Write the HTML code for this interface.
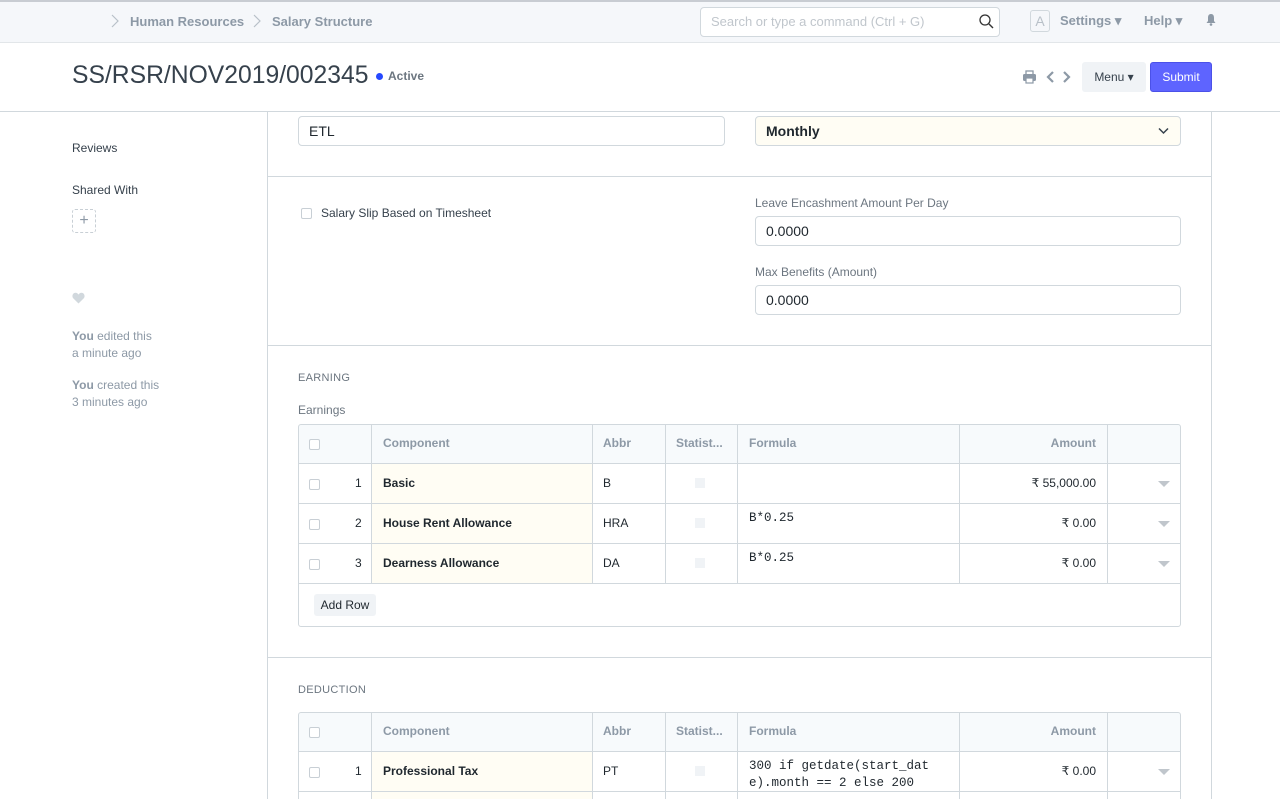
<!DOCTYPE html>
<html><head><meta charset="utf-8"><style>
*{box-sizing:border-box;margin:0;padding:0}
html,body{width:1280px;height:799px;overflow:hidden}
body{background:#fff;font-family:"Liberation Sans",sans-serif;color:#1f272e;position:relative;font-size:13px}
.a{position:absolute}
.nav{left:0;top:0;width:1280px;height:43px;background:#f5f7fa;border-top:2px solid #c8ccd2;border-bottom:1px solid #e2e6e9}
.g{color:#8d99a6}
.inp{border:1px solid #d1d8dd;border-radius:4px;background:#fff;height:30px;padding:0 10px;line-height:28px;font-size:14px}
.lbl{font-size:12px;color:#6c7680}
.row{position:absolute;left:299px;width:881px;height:40px;border-bottom:1px solid #d1d8dd}
.cb{position:absolute;width:11px;height:11px;border:1px solid #c8cfd5;border-radius:2px;background:#fff}
.t{position:absolute;top:0;line-height:40px;font-size:12px}
.mono{font-family:"Liberation Mono",monospace;font-size:12.5px}
.tri{position:absolute;width:0;height:0;border-left:6px solid transparent;border-right:6px solid transparent;border-top:6px solid #c0c6cc}
</style></head><body>
<div class="a nav"></div>
<svg class="a" style="left:110px;top:14px" width="10" height="14" viewBox="0 0 10 14"><path d="M2 1L8 7L2 13" fill="none" stroke="#b8c0c8" stroke-width="1.2"/></svg>
<div class="a g" style="left:130px;top:14px;font-size:13px;font-weight:bold">Human Resources</div>
<svg class="a" style="left:252px;top:14px" width="10" height="14" viewBox="0 0 10 14"><path d="M2 1L8 7L2 13" fill="none" stroke="#b8c0c8" stroke-width="1.2"/></svg>
<div class="a g" style="left:272px;top:14px;font-size:13px;font-weight:bold">Salary Structure</div>
<div class="a inp" style="left:700px;top:7px;width:300px;height:30px;font-size:13px;color:#c0c6cc;line-height:28px">Search or type a command (Ctrl + G)</div>
<svg class="a" style="left:979px;top:14px" width="15" height="15" viewBox="0 0 15 15"><circle cx="6" cy="6" r="5" fill="none" stroke="#333" stroke-width="1.3"/><path d="M10 10L14 14" stroke="#333" stroke-width="1.4"/></svg>
<div class="a" style="left:1030px;top:10px;width:20px;height:22px;border:1px solid #d1d8dd;border-radius:3px;color:#b8c0c8;text-align:center;line-height:20px;font-size:14px">A</div>
<div class="a g" style="left:1060px;top:13px;font-weight:bold">Settings ▾</div>
<div class="a g" style="left:1144px;top:13px;font-weight:bold">Help ▾</div>
<svg class="a" style="left:1205px;top:13px" width="12" height="13" viewBox="0 0 12 13"><path d="M6 1C3.5 1 3 3 3 5v3L1.5 10h9L9 8V5C9 3 8.5 1 6 1z" fill="#8d99a6"/><circle cx="6" cy="11.5" r="1.3" fill="#8d99a6"/></svg>

<div class="a" style="left:72px;top:62px;font-size:24.7px;color:#36414c">SS/RSR/NOV2019/002345</div>
<div class="a" style="left:376px;top:73px;width:7px;height:7px;border-radius:50%;background:#2649ff"></div>
<div class="a" style="left:388px;top:69px;font-size:12px;font-weight:bold;color:#6c7680">Active</div>
<svg class="a" style="left:1022px;top:69px" width="50" height="16" viewBox="0 0 50 16"><rect x="1" y="5" width="13" height="7" rx="1.5" fill="#8d99a6"/><rect x="4" y="2" width="7" height="4" fill="none" stroke="#8d99a6" stroke-width="1.3"/><rect x="4" y="9" width="7" height="5" fill="#fff" stroke="#8d99a6" stroke-width="1.2"/><path d="M31 3L26 8L31 13" fill="none" stroke="#8d99a6" stroke-width="2.2"/><path d="M42 3L47 8L42 13" fill="none" stroke="#8d99a6" stroke-width="2.2"/></svg>
<div class="a" style="left:1082px;top:62px;width:64px;height:30px;background:#f0f3f6;border-radius:3px;line-height:30px;text-align:center;font-size:12px;color:#36414c">Menu ▾</div>
<div class="a" style="left:1150px;top:62px;width:62px;height:30px;background:#5e64ff;border:1px solid #4b51e8;border-radius:3px;line-height:28px;text-align:center;font-size:12px;color:#fff">Submit</div>
<div class="a" style="left:0;top:111px;width:1280px;border-top:1px solid #d1d8dd"></div>

<div class="a" style="left:72px;top:141px;font-size:12px;color:#36414c">Reviews</div>
<div class="a" style="left:72px;top:183px;font-size:12px;color:#36414c">Shared With</div>
<div class="a" style="left:72px;top:209px;width:24px;height:24px;border:1px dashed #c8cfd5;border-radius:3px;color:#8d99a6;text-align:center;line-height:22px;font-size:16px">+</div>
<svg class="a" style="left:72px;top:292px" width="13" height="12" viewBox="0 0 13 12"><path d="M6.5 11.5L1.2 6.2C-0.5 4.3 0.8 0.8 3.5 0.8c1.4 0 2.3 0.8 3 1.8c0.7-1 1.6-1.8 3-1.8c2.7 0 4 3.5 2.3 5.4z" fill="#d1d8dd"/></svg>
<div class="a" style="left:72px;top:328px;font-size:12px;color:#8d99a6;line-height:17px"><b>You</b> edited this<br>a minute ago</div>
<div class="a" style="left:72px;top:377px;font-size:12px;color:#8d99a6;line-height:17px"><b>You</b> created this<br>3 minutes ago</div>

<div class="a" style="left:267px;top:111px;width:945px;height:688px;border-left:1px solid #d1d8dd;border-right:1px solid #d1d8dd"></div>
<div class="a" style="left:267px;top:176px;width:945px;border-top:1px solid #d1d8dd"></div>
<div class="a" style="left:267px;top:345px;width:945px;border-top:1px solid #d1d8dd"></div>
<div class="a" style="left:267px;top:657px;width:945px;border-top:1px solid #d1d8dd"></div>

<div class="a inp" style="left:298px;top:116px;width:427px">ETL</div>
<div class="a inp" style="left:755px;top:116px;width:426px;background:#fffdf4;font-weight:bold">Monthly</div>
<svg class="a" style="left:1158px;top:127px" width="11" height="8" viewBox="0 0 11 8"><path d="M1 1.5L5.5 6L10 1.5" fill="none" stroke="#36414c" stroke-width="1.5"/></svg>

<div class="cb" style="left:301px;top:208px"></div>
<div class="a" style="left:321px;top:206px;font-size:12px;color:#36414c">Salary Slip Based on Timesheet</div>
<div class="a lbl" style="left:755px;top:196px">Leave Encashment Amount Per Day</div>
<div class="a inp" style="left:755px;top:216px;width:426px">0.0000</div>
<div class="a lbl" style="left:755px;top:265px">Max Benefits (Amount)</div>
<div class="a inp" style="left:755px;top:285px;width:426px">0.0000</div>

<div class="a lbl" style="left:298px;top:372px;font-size:11px;letter-spacing:.3px">EARNING</div>
<div class="a lbl" style="left:298px;top:403px">Earnings</div>

<div class="row" style="top:425px;background:#f7fafc;height:39px"></div>
<div class="row" style="top:464px"></div><div class="row" style="top:504px"></div><div class="row" style="top:544px"></div>
<div class="a" style="left:372px;top:464px;width:220px;height:39px;background:#fffdf4"></div>
<div class="a" style="left:372px;top:504px;width:220px;height:39px;background:#fffdf4"></div>
<div class="a" style="left:372px;top:544px;width:220px;height:39px;background:#fffdf4"></div>
<div class="a" style="left:298px;top:424px;width:883px;height:203px;border:1px solid #d1d8dd;border-radius:3px"></div>
<div class="a" style="left:371px;top:424px;height:160px;border-left:1px solid #d1d8dd"></div>
<div class="a" style="left:592px;top:424px;height:160px;border-left:1px solid #d1d8dd"></div>
<div class="a" style="left:665px;top:424px;height:160px;border-left:1px solid #d1d8dd"></div>
<div class="a" style="left:737px;top:424px;height:160px;border-left:1px solid #d1d8dd"></div>
<div class="a" style="left:959px;top:424px;height:160px;border-left:1px solid #d1d8dd"></div>
<div class="a" style="left:1107px;top:424px;height:160px;border-left:1px solid #d1d8dd"></div>
<div class="cb" style="left:309px;top:439px"></div>
<div class="t g" style="left:383px;top:423px;font-weight:bold">Component</div>
<div class="t g" style="left:603px;top:423px;font-weight:bold">Abbr</div>
<div class="t g" style="left:676px;top:423px;font-weight:bold">Statist...</div>
<div class="t g" style="left:749px;top:423px;font-weight:bold">Formula</div>
<div class="t g" style="left:1000px;top:423px;width:96px;text-align:right;font-weight:bold">Amount</div>

<div class="cb" style="left:309px;top:479px"></div><div class="t" style="left:355px;top:463px">1</div>
<div class="t" style="left:383px;top:463px;font-weight:bold">Basic</div><div class="t" style="left:603px;top:463px">B</div>
<div class="a" style="left:695px;top:478px;width:10px;height:10px;background:#f0f3f6"></div>
<div class="t" style="left:960px;top:463px;width:136px;text-align:right">₹ 55,000.00</div><div class="tri" style="left:1158px;top:481px"></div>

<div class="cb" style="left:309px;top:519px"></div><div class="t" style="left:355px;top:503px">2</div>
<div class="t" style="left:383px;top:503px;font-weight:bold">House Rent Allowance</div><div class="t" style="left:603px;top:503px">HRA</div>
<div class="a" style="left:695px;top:518px;width:10px;height:10px;background:#f0f3f6"></div>
<div class="a mono" style="left:749px;top:511px">B*0.25</div>
<div class="t" style="left:960px;top:503px;width:136px;text-align:right">₹ 0.00</div><div class="tri" style="left:1158px;top:521px"></div>

<div class="cb" style="left:309px;top:559px"></div><div class="t" style="left:355px;top:543px">3</div>
<div class="t" style="left:383px;top:543px;font-weight:bold">Dearness Allowance</div><div class="t" style="left:603px;top:543px">DA</div>
<div class="a" style="left:695px;top:558px;width:10px;height:10px;background:#f0f3f6"></div>
<div class="a mono" style="left:749px;top:551px">B*0.25</div>
<div class="t" style="left:960px;top:543px;width:136px;text-align:right">₹ 0.00</div><div class="tri" style="left:1158px;top:561px"></div>

<div class="a" style="left:314px;top:594px;width:62px;height:22px;background:#f0f3f6;border-radius:3px;font-size:12px;line-height:22px;text-align:center">Add Row</div>

<div class="a lbl" style="left:298px;top:684px;font-size:11px;letter-spacing:.3px">DEDUCTION</div>
<div class="row" style="top:713px;background:#f7fafc;height:39px"></div>
<div class="row" style="top:752px"></div>
<div class="a" style="left:372px;top:752px;width:220px;height:39px;background:#fffdf4"></div>
<div class="a" style="left:372px;top:792px;width:220px;height:10px;background:#fffdf4"></div>
<div class="a" style="left:298px;top:712px;width:883px;height:100px;border:1px solid #d1d8dd;border-radius:3px"></div>
<div class="a" style="left:371px;top:712px;height:90px;border-left:1px solid #d1d8dd"></div>
<div class="a" style="left:592px;top:712px;height:90px;border-left:1px solid #d1d8dd"></div>
<div class="a" style="left:665px;top:712px;height:90px;border-left:1px solid #d1d8dd"></div>
<div class="a" style="left:737px;top:712px;height:90px;border-left:1px solid #d1d8dd"></div>
<div class="a" style="left:959px;top:712px;height:90px;border-left:1px solid #d1d8dd"></div>
<div class="a" style="left:1107px;top:712px;height:90px;border-left:1px solid #d1d8dd"></div>
<div class="cb" style="left:309px;top:727px"></div>
<div class="t g" style="left:383px;top:711px;font-weight:bold">Component</div>
<div class="t g" style="left:603px;top:711px;font-weight:bold">Abbr</div>
<div class="t g" style="left:676px;top:711px;font-weight:bold">Statist...</div>
<div class="t g" style="left:749px;top:711px;font-weight:bold">Formula</div>
<div class="t g" style="left:1000px;top:711px;width:96px;text-align:right;font-weight:bold">Amount</div>
<div class="cb" style="left:309px;top:767px"></div><div class="t" style="left:355px;top:751px">1</div>
<div class="t" style="left:383px;top:751px;font-weight:bold">Professional Tax</div><div class="t" style="left:603px;top:751px">PT</div>
<div class="a" style="left:695px;top:766px;width:10px;height:10px;background:#f0f3f6"></div>
<div class="a mono" style="left:749px;top:758px;line-height:17px">300 if getdate(start_dat<br>e).month == 2 else 200</div>
<div class="t" style="left:960px;top:751px;width:136px;text-align:right">₹ 0.00</div><div class="tri" style="left:1158px;top:769px"></div>
</body></html>
